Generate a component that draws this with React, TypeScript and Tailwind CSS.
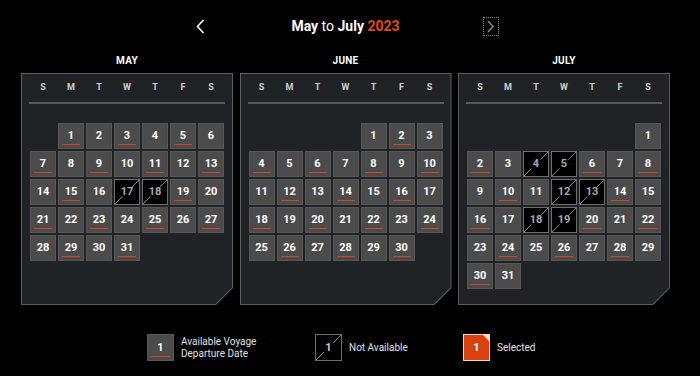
import React from 'react';

type MonthData = {
  name: string;
  offset: number;
  days: number;
  na: number[];
  markOdd: boolean;
};

const months: MonthData[] = [
  { name: 'MAY', offset: 1, days: 31, na: [17, 18], markOdd: true },
  { name: 'JUNE', offset: 4, days: 30, na: [], markOdd: false },
  { name: 'JULY', offset: 6, days: 31, na: [4, 5, 12, 13, 18, 19], markOdd: false },
];

const weekDays = ['S', 'M', 'T', 'W', 'T', 'F', 'S'];

const AvailCell: React.FC<{ day: number; mark: boolean }> = ({ day, mark }) => (
  <div className="relative w-[26px] h-[26px] bg-[#4b4b4b] border border-[#575757] flex items-center justify-center text-white text-[11px] font-bold leading-none">
    <span className="-mt-[1px]">{day}</span>
    {mark && <div className="absolute left-[3px] right-[3px] bottom-[3px] h-[1px] bg-[#d2461b]" />}
  </div>
);

const NaCell: React.FC<{ day: number }> = ({ day }) => (
  <div className="relative w-[26px] h-[26px] bg-black border border-[#6e6e6e] flex items-center justify-center text-[#a8a8a8] text-[11px] font-bold leading-none">
    <svg className="absolute inset-0" width="24" height="24" viewBox="0 0 24 24">
      <line x1="0" y1="24" x2="7.5" y2="16.5" stroke="#8a8a8a" strokeWidth="1" />
      <line x1="16.5" y1="7.5" x2="24" y2="0" stroke="#8a8a8a" strokeWidth="1" />
    </svg>
    <span className="relative -mt-[1px]">{day}</span>
  </div>
);

const MonthPanel: React.FC<{ m: MonthData }> = ({ m }) => {
  const cells: React.ReactNode[] = [];
  for (let i = 0; i < m.offset; i++) cells.push(<div key={'e' + i} />);
  for (let d = 1; d <= m.days; d++) {
    if (m.na.includes(d)) {
      cells.push(<NaCell key={d} day={d} />);
    } else {
      const mark = m.markOdd ? d % 2 === 1 : d % 2 === 0;
      cells.push(<AvailCell key={d} day={d} mark={mark} />);
    }
  }
  return (
    <div className="w-[212px] flex flex-col">
      {/* Month title */}
      <div className="h-[21px] pb-[5px] flex items-center justify-center text-white text-[10px] font-bold tracking-wide">
        {m.name}
      </div>
      {/* Panel with cut corner */}
      <div className="h-[232px] p-[1px] bg-[#5d6063] [clip-path:polygon(0_0,100%_0,100%_calc(100%_-_17px),calc(100%_-_17px)_100%,0_100%)]">
        <div className="h-full bg-[#1f2326] px-[8px] pt-[7px] [clip-path:polygon(0_0,100%_0,100%_calc(100%_-_16.5px),calc(100%_-_16.5px)_100%,0_100%)]">
          <div className="grid grid-cols-7 gap-[2px] h-[14px]">
            {weekDays.map((w, i) => (
              <div key={i} className="flex items-center justify-center text-[#d0d0d0] text-[9px] font-bold">
                {w}
              </div>
            ))}
          </div>
          <div className="mt-[7px] mx-[-1px] h-[2px] bg-[#55595c]" />
          <div className="mt-[19px] grid grid-cols-[repeat(7,26px)] gap-[2px]">{cells}</div>
        </div>
      </div>
    </div>
  );
};

export default function App() {
  return (
    <div className="w-[700px] h-[376px] bg-black font-['Roboto',sans-serif] overflow-hidden">
      <div className="w-[649px] ml-[21px]">
        {/* Header */}
        <div className="h-[52px] flex items-center justify-center">
          <div className="w-[16px] h-[19px] flex items-center justify-center">
            <svg width="9" height="15" viewBox="0 0 9 15">
              <polyline points="7.5,1 1.5,7.5 7.5,14" fill="none" stroke="#ffffff" strokeWidth="1.6" />
            </svg>
          </div>
          <div className="w-[274px] text-center text-white text-[14px] leading-none">
            <span className="font-bold">May</span> <span>to</span> <span className="font-bold">July</span>{' '}
            <span className="font-bold text-[#e0491a]">2023</span>
          </div>
          <div className="w-[16px] h-[19px] border border-dotted border-[#8a8a8a] flex items-center justify-center">
            <svg width="7" height="13" viewBox="0 0 7 13">
              <polyline points="1,1 6,6.5 1,12" fill="none" stroke="#8c8c8c" strokeWidth="1.4" />
            </svg>
          </div>
        </div>

        {/* Months */}
        <div className="flex justify-between">
          {months.map(m => (
            <MonthPanel key={m.name} m={m} />
          ))}
        </div>

        {/* Legend */}
        <div className="mt-[29px] ml-[126px] flex items-center text-[#e0e0e0] text-[10px] leading-[12px]">
          <div className="w-[168px] flex items-center gap-[7px]">
            <div className="relative w-[27px] h-[27px] bg-[#4b4b4b] border border-[#575757] flex items-center justify-center text-white text-[11px] font-bold">
              1
              <div className="absolute left-[3px] right-[3px] bottom-[3px] h-[1px] bg-[#d2461b]" />
            </div>
            <div>
              <div>Available Voyage</div>
              <div>Departure Date</div>
            </div>
          </div>
          <div className="w-[148px] flex items-center gap-[7px]">
            <div className="relative w-[27px] h-[27px] bg-black border border-[#6e6e6e] flex items-center justify-center text-[#c8c8c8] text-[11px] font-bold">
              <svg className="absolute inset-0" width="25" height="25" viewBox="0 0 25 25">
                <line x1="0" y1="25" x2="8" y2="17" stroke="#8a8a8a" strokeWidth="1" />
                <line x1="17" y1="8" x2="25" y2="0" stroke="#8a8a8a" strokeWidth="1" />
              </svg>
              <span className="relative">1</span>
            </div>
            <div>Not Available</div>
          </div>
          <div className="flex items-center gap-[7px]">
            <div className="relative w-[27px] h-[27px] bg-[#d9420f] border border-[#e8d8d0] flex items-center justify-center text-white text-[11px] font-bold">
              <svg className="absolute right-0 top-0" width="6" height="6" viewBox="0 0 6 6">
                <polygon points="0,0 6,0 6,6" fill="#f0e0d8" />
              </svg>
              1
            </div>
            <div>Selected</div>
          </div>
        </div>
      </div>
    </div>
  );
}
